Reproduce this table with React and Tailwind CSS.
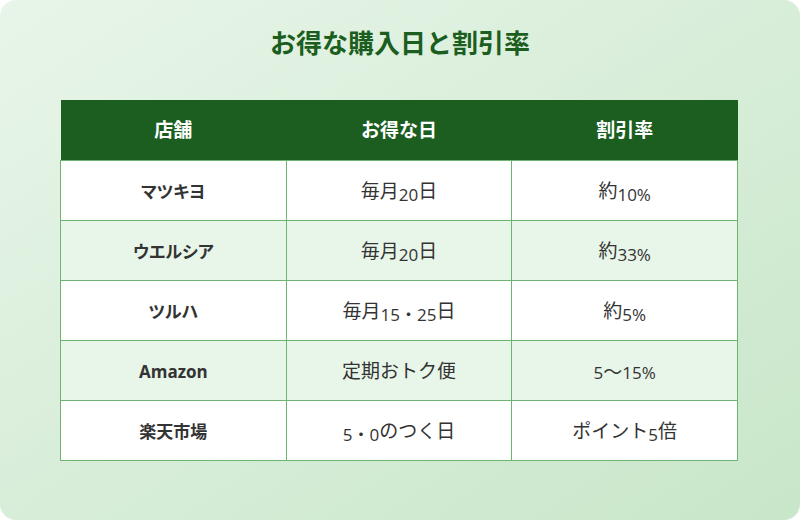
import React from 'react';

const ROWS = [
  { store: 'マツキヨ', day: '毎月20日', rate: '約10%' },
  { store: 'ウエルシア', day: '毎月20日', rate: '約33%' },
  { store: 'ツルハ', day: '毎月15・25日', rate: '約5%' },
  { store: 'Amazon', day: '定期おトク便', rate: '5〜15%' },
  { store: '楽天市場', day: '5・0のつく日', rate: 'ポイント5倍' },
];

// kana / kanji runs come out a bit larger and sit higher than the latin digits
const CJK = /([\u3041-\u309f\u30a0-\u30fa\u30fc-\u30ff\u4e00-\u9fff]+|〜)/;

function Mixed({ text }) {
  const parts = text.split(CJK).filter(Boolean);
  return parts.map((p, i) => {
    if (p === '〜') return <span key={i} className="text-[19px]">{p}</span>;
    if (CJK.test(p)) return <span key={i} className="text-[19px] align-[3px]">{p}</span>;
    return <span key={i}>{p}</span>;
  });
}

export default function App() {
  return (
    <div
      className="w-[800px] h-[520px] bg-white"
      style={{ fontFamily: '"Open Sans", "Noto Sans CJK JP", sans-serif' }}
    >
      <div className="w-full h-full rounded-2xl bg-gradient-to-br from-[#e8f5e9] to-[#c8e6c9] px-[60px] pt-[26px]">
        <h1 className="text-center text-[26px] font-bold text-[#1b5e20] leading-[34px] mb-[40px]">
          お得な購入日と割引率
        </h1>
        <table className="w-[678px] border-collapse table-fixed text-[17px] text-[#333]">
          <thead>
            <tr className="bg-[#1b5e20] text-white h-[60px] text-[19px]">
              <th className="font-bold">店舗</th>
              <th className="font-bold">お得な日</th>
              <th className="font-bold">割引率</th>
            </tr>
          </thead>
          <tbody>
            {ROWS.map((r, i) => (
              <tr key={r.store} className={i % 2 ? 'bg-[#e8f5e9] h-[60px]' : 'bg-white h-[60px]'}>
                <td className="border border-[#6cb46f] text-center font-bold text-[17px] pt-[4px] [font-feature-settings:'palt']">
                  {r.store}
                </td>
                <td className="border border-[#6cb46f] text-center pt-[4px]">
                  <Mixed text={r.day} />
                </td>
                <td className="border border-[#6cb46f] text-center pt-[4px]">
                  <Mixed text={r.rate} />
                </td>
              </tr>
            ))}
          </tbody>
        </table>
      </div>
    </div>
  );
}
